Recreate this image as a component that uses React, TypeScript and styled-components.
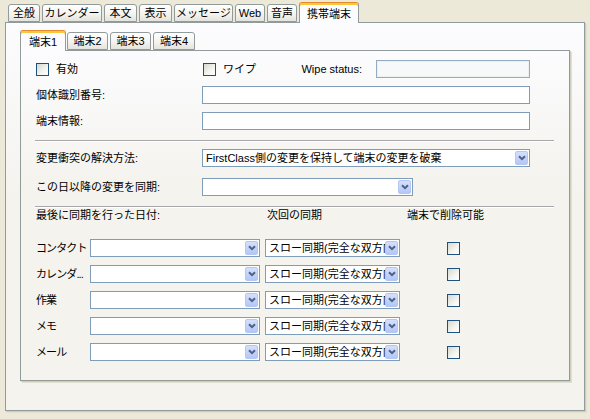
import React from "react";
import styled, { createGlobalStyle } from "styled-components";

const GlobalStyle = createGlobalStyle`
  html, body {
    margin: 0;
    padding: 0;
    background: #ece9d8;
  }
  * {
    box-sizing: border-box;
  }
`;

const Window = styled.div`
  width: 590px;
  height: 419px;
  padding: 2px 0 0 5px;
  background: #ece9d8;
  font-family: "Liberation Sans", "Noto Sans CJK JP", sans-serif;
  font-size: 11px;
  color: #000;
  display: flex;
  flex-direction: column;
`;

const TabStrip = styled.div<{ $inset?: number }>`
  display: flex;
  align-items: flex-end;
  gap: 2px;
  height: 20px;
  padding-left: ${({ $inset }) => $inset ?? 0}px;
  flex-shrink: 0;
`;

const Tab = styled.div<{ $width: number; $active?: boolean }>`
  width: ${({ $width }) => $width}px;
  height: ${({ $active }) => ($active ? 21 : 18)}px;
  margin-bottom: ${({ $active }) => ($active ? -1 : 0)}px;
  position: relative;
  z-index: ${({ $active }) => ($active ? 1 : 0)};
  border: 1px solid #919b9c;
  border-bottom: ${({ $active }) => ($active ? "none" : "1px solid #919b9c")};
  border-top-color: ${({ $active }) => ($active ? "#e68b2c" : "#919b9c")};
  border-radius: 3px 3px 0 0;
  background: ${({ $active }) =>
    $active ? "#fcfcfe" : "linear-gradient(#ffffff, #f3f2ed 60%, #e4e3dc)"};
  box-shadow: ${({ $active }) => ($active ? "inset 0 2px 0 #ffc73c" : "none")};
  display: flex;
  align-items: center;
  justify-content: center;
  padding-top: ${({ $active }) => ($active ? 1 : 0)}px;
  line-height: 14px;
  white-space: nowrap;
`;

const InnerTab = styled(Tab)`
  margin-right: ${({ $active }) => ($active ? -1 : 0)}px;
`;

const Pane = styled.div`
  width: 580px;
  height: 389px;
  border: 1px solid #919b9c;
  background: linear-gradient(#fcfcfe, #f4f3ee 45%);
  box-shadow: 1px 1px 0 #d0cebf, 2px 2px 0 #e2dfcf;
  padding: 7px 14px 29px 14px;
  display: flex;
  flex-direction: column;
`;

const InnerPane = styled.div`
  flex: 1;
  border: 1px solid #919b9c;
  background: linear-gradient(#fcfcfe, #f4f3ee 40%);
  box-shadow: 1px 1px 0 #d0cebf, 2px 2px 0 #e2dfcf;
  padding: 9px 15px 0 15px;
  display: flex;
  flex-direction: column;
`;

const FieldRow = styled.div<{ $gapAfter?: number }>`
  display: flex;
  align-items: center;
  height: 18px;
  padding-right: 24px;
  margin-bottom: ${({ $gapAfter }) => $gapAfter ?? 8}px;
`;

const FieldLabel = styled.div`
  width: 166px;
  flex-shrink: 0;
  line-height: 18px;
  white-space: nowrap;
`;

const CheckField = styled.label<{ $width?: number }>`
  display: flex;
  align-items: center;
  gap: 7px;
  width: ${({ $width }) => ($width ? `${$width}px` : "auto")};
  flex: ${({ $width }) => ($width ? "0 0 auto" : "1")};
  line-height: 18px;
`;

const CheckBox = styled.span`
  display: inline-block;
  width: 13px;
  height: 13px;
  flex-shrink: 0;
  border: 1px solid #1c5180;
  background: linear-gradient(135deg, #d8d8d2, #f4f4f0 60%, #ffffff);
`;

const WipeLabel = styled.div`
  white-space: nowrap;
  line-height: 18px;
`;

const TextBox = styled.div<{ $width?: number; $disabled?: boolean }>`
  height: 18px;
  width: ${({ $width }) => ($width ? `${$width}px` : "auto")};
  flex: ${({ $width }) => ($width ? "0 0 auto" : "1")};
  margin-left: ${({ $width }) => ($width ? 14 : 0)}px;
  border: 1px solid ${({ $disabled }) => ($disabled ? "#94abc1" : "#7f9db9")};
  background: ${({ $disabled }) => ($disabled ? "#f7f8f9" : "#ffffff")};
  box-shadow: ${({ $disabled }) => ($disabled ? "inset 0 0 0 1px #eef0ee" : "none")};
`;

const SelectBox = styled.div<{ $width?: number }>`
  height: 18px;
  width: ${({ $width }) => ($width ? `${$width}px` : "auto")};
  flex: ${({ $width }) => ($width ? "0 0 auto" : "1")};
  border: 1px solid #7f9db9;
  background: #ffffff;
  display: flex;
  align-items: center;
  padding: 1px;
`;

const SelectText = styled.div`
  flex: 1;
  overflow: hidden;
  white-space: nowrap;
  padding-left: 2px;
  line-height: 14px;
`;

const DropButton = styled.div`
  width: 13px;
  height: 14px;
  flex-shrink: 0;
  border: 1px solid #b4c7f2;
  border-radius: 2px;
  background: linear-gradient(#d4e0fd, #b3c7f7);
  display: flex;
  align-items: center;
  justify-content: center;
`;

const Separator = styled.div<{ $before: number; $after: number }>`
  height: 2px;
  margin: ${({ $before, $after }) => `${$before}px 0 ${$after}px -1px`};
  border-top: 1px solid #a7a6aa;
  border-bottom: 1px solid #ffffff;
  flex-shrink: 0;
`;

const SyncGrid = styled.div`
  display: grid;
  grid-template-columns: 54px 175px 142px 1fr;
  grid-auto-rows: 18px;
  row-gap: 8px;
  align-items: center;
`;

const GridHeader = styled.div<{ $span?: number; $indent?: number }>`
  grid-column: span ${({ $span }) => $span ?? 1};
  padding-left: ${({ $indent }) => $indent ?? 0}px;
  white-space: nowrap;
  line-height: 18px;
  margin-bottom: 7px;
  align-self: end;
`;

const HeaderRow = styled.div`
  display: contents;
`;

const RowLabel = styled.div`
  white-space: nowrap;
  overflow: hidden;
  letter-spacing: -0.9px;
  line-height: 18px;
`;

const DeleteCell = styled.div`
  padding-left: 40px;
  display: flex;
  align-items: center;
`;

function Chevron() {
  return (
    <svg width="8" height="6" viewBox="0 0 8 6">
      <path d="M1 1.2 L4 4.2 L7 1.2" fill="none" stroke="#4d6185" strokeWidth="2" />
    </svg>
  );
}

function Select({ width, value }: { width?: number; value?: string }) {
  return (
    <SelectBox $width={width}>
      <SelectText>{value}</SelectText>
      <DropButton>
        <Chevron />
      </DropButton>
    </SelectBox>
  );
}

const outerTabs = [
  { label: "全般", width: 32 },
  { label: "カレンダー", width: 60 },
  { label: "本文", width: 33 },
  { label: "表示", width: 33 },
  { label: "メッセージ", width: 59 },
  { label: "Web", width: 30 },
  { label: "音声", width: 30 },
  { label: "携帯端末", width: 60, active: true },
];

const deviceTabs = [
  { label: "端末1", width: 46, active: true },
  { label: "端末2", width: 41 },
  { label: "端末3", width: 41 },
  { label: "端末4", width: 42 },
];

const syncItems = ["コンタクト", "カレンダ...", "作業", "メモ", "メール"];
const slowSync = "スロー同期(完全な双方向同期)";

export default function App() {
  return (
    <>
      <GlobalStyle />
      <Window>
        <TabStrip $inset={3}>
          {outerTabs.map((t) => (
            <Tab key={t.label} $width={t.width} $active={t.active}>
              {t.label}
            </Tab>
          ))}
        </TabStrip>
        <Pane>
          <TabStrip>
            {deviceTabs.map((t) => (
              <InnerTab key={t.label} $width={t.width} $active={t.active}>
                {t.label}
              </InnerTab>
            ))}
          </TabStrip>
          <InnerPane>
            <FieldRow>
              <CheckField $width={167}>
                <CheckBox />
                有効
              </CheckField>
              <CheckField>
                <CheckBox />
                ワイプ
              </CheckField>
              <WipeLabel>Wipe status:</WipeLabel>
              <TextBox $width={154} $disabled />
            </FieldRow>
            <FieldRow>
              <FieldLabel>個体識別番号:</FieldLabel>
              <TextBox />
            </FieldRow>
            <FieldRow $gapAfter={0}>
              <FieldLabel>端末情報:</FieldLabel>
              <TextBox />
            </FieldRow>

            <Separator $before={10} $after={7} />

            <FieldRow $gapAfter={11}>
              <FieldLabel>変更衝突の解決方法:</FieldLabel>
              <Select value="FirstClass側の変更を保持して端末の変更を破棄" />
            </FieldRow>
            <FieldRow $gapAfter={0}>
              <FieldLabel>この日以降の変更を同期:</FieldLabel>
              <Select width={211} />
            </FieldRow>

            <Separator $before={10} $after={5} />

            <SyncGrid>
              <HeaderRow>
                <GridHeader $span={2}>最後に同期を行った日付:</GridHeader>
                <GridHeader $indent={2}>次回の同期</GridHeader>
                <GridHeader>端末で削除可能</GridHeader>
              </HeaderRow>
              {syncItems.map((item) => (
                <React.Fragment key={item}>
                  <RowLabel>{item}</RowLabel>
                  <Select width={170} />
                  <Select width={135} value={slowSync} />
                  <DeleteCell>
                    <CheckBox />
                  </DeleteCell>
                </React.Fragment>
              ))}
            </SyncGrid>
          </InnerPane>
        </Pane>
      </Window>
    </>
  );
}
